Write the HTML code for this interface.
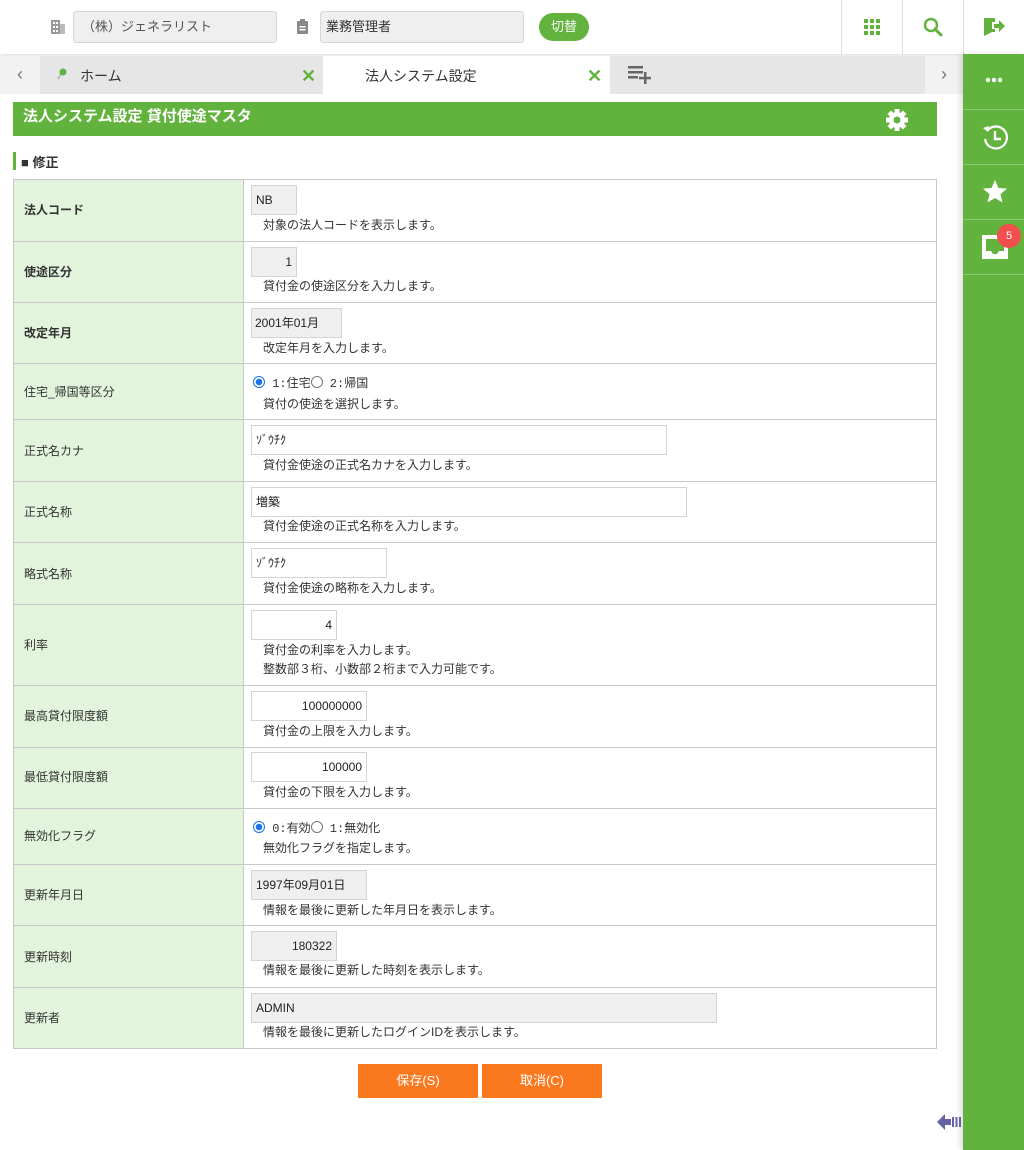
<!DOCTYPE html>
<html><head><meta charset="utf-8"><style>
*{box-sizing:border-box;margin:0;padding:0}
body{width:1024px;height:1150px;position:relative;background:#fff;font-family:"Liberation Sans","Noto Sans CJK JP",sans-serif;font-size:13px;color:#333;overflow:hidden}
.a{position:absolute}
.inp{position:absolute;border:1px solid #d4d4d4;height:30px;font-size:12px;line-height:28px;padding:0 4px;color:#222;background:#fff}
.g{background:#efefef}
.r{text-align:right}
.d{position:absolute;left:263px;font-size:12px;color:#333;line-height:19px}
.lab{position:absolute;left:24px;font-size:12px;color:#333}
.b{font-weight:bold}
.hl{position:absolute;left:13px;width:924px;height:1px;background:#c8c8c8}
.radio{display:inline-block;width:12px;height:12px;border-radius:50%;border:1px solid #777;vertical-align:-1px;background:#fff}
.radio.on{border:1px solid #1a73e8;background:radial-gradient(circle,#1a73e8 0 3px,#fff 3.5px)}
.rt{font-family:"Liberation Mono","Noto Sans CJK JP",monospace;font-size:12px}
.sb{position:absolute;left:963px;width:61px;height:1px;background:#8cc873}
</style></head><body>
<div class="a" style="left:0;top:0;width:1024px;height:54px;background:#fff;box-shadow:0 2px 3px rgba(0,0,0,.12)"></div>
<svg class="a" style="left:50px;top:19px" width="16" height="16"><rect x="1" y="1" width="9" height="14" fill="#999"/><rect x="10" y="5" width="5" height="10" fill="#bbb"/><g fill="#fff"><rect x="3" y="3" width="2" height="2"/><rect x="6" y="3" width="2" height="2"/><rect x="3" y="7" width="2" height="2"/><rect x="6" y="7" width="2" height="2"/><rect x="3" y="11" width="2" height="2"/><rect x="6" y="11" width="2" height="2"/></g></svg>
<div class="a" style="left:73px;top:11px;width:204px;height:32px;background:#efefef;border:1px solid #d6d6d6;border-radius:3px;font-size:13px;line-height:30px;padding-left:8px;color:#555">（株）ジェネラリスト</div>
<svg class="a" style="left:296px;top:19px" width="14" height="16"><rect x="1" y="2" width="11" height="13" rx="1" fill="#888"/><rect x="4" y="0" width="5" height="4" fill="#888"/><rect x="3.5" y="7" width="6" height="1.5" fill="#fff"/><rect x="3.5" y="10" width="6" height="1.5" fill="#fff"/></svg>
<div class="a" style="left:320px;top:11px;width:204px;height:32px;background:#efefef;border:1px solid #d6d6d6;border-radius:3px;font-size:13px;line-height:30px;padding-left:5px;color:#333">業務管理者</div>
<div class="a" style="left:539px;top:13px;width:50px;height:28px;background:#62b23e;border-radius:14px;color:#fff;font-size:13px;line-height:28px;text-align:center">切替</div>
<div class="a" style="left:841px;top:0;width:1px;height:54px;background:#ddd"></div>
<div class="a" style="left:902px;top:0;width:1px;height:54px;background:#ddd"></div>
<div class="a" style="left:963px;top:0;width:1px;height:54px;background:#ddd"></div>
<svg class="a" style="left:864px;top:19px" width="16" height="16" fill="#62b23e"><rect x="0" y="0" width="4" height="4"/><rect x="6" y="0" width="4" height="4"/><rect x="12" y="0" width="4" height="4"/><rect x="0" y="6" width="4" height="4"/><rect x="6" y="6" width="4" height="4"/><rect x="12" y="6" width="4" height="4"/><rect x="0" y="12" width="4" height="4"/><rect x="6" y="12" width="4" height="4"/><rect x="12" y="12" width="4" height="4"/></svg>
<svg class="a" style="left:923px;top:17px" width="20" height="20"><circle cx="8" cy="8" r="6" fill="none" stroke="#62b23e" stroke-width="2.5"/><path d="M12 12l6 6" stroke="#62b23e" stroke-width="3" stroke-linecap="round"/></svg>
<svg class="a" style="left:983px;top:17px" width="22" height="20"><path d="M1 1h11v4h-3v10l-8 4z" fill="#62b23e"/><path d="M9 15h3v-3h-3z" fill="#62b23e"/><path d="M11 7h5v-4l6 6-6 6v-4h-5z" fill="#62b23e"/></svg>
<div class="a" style="left:0;top:56px;width:963px;height:38px;background:#e6e6e6"></div>
<div class="a" style="left:0;top:56px;width:40px;height:38px;background:#f2f2f2;color:#777;font-size:18px;line-height:36px;text-align:center">&#8249;</div>
<div class="a" style="left:925px;top:56px;width:38px;height:38px;background:#f2f2f2;color:#777;font-size:18px;line-height:36px;text-align:center">&#8250;</div>
<svg class="a" style="left:56px;top:67px" width="12" height="14"><path d="M5 7L2 12" stroke="#aaa" stroke-width="1.3"/><circle cx="7" cy="5" r="3.5" fill="#62b23e"/></svg>
<div class="a" style="left:80px;top:66px;font-size:14px;color:#333">ホーム</div>
<div class="a" style="left:301px;top:66px;font-size:18px;font-weight:bold;color:#62b23e">✕</div>
<div class="a" style="left:323px;top:56px;width:287px;height:38px;background:#fff"></div>
<div class="a" style="left:365px;top:66px;font-size:14px;color:#333">法人システム設定</div>
<div class="a" style="left:587px;top:66px;font-size:18px;font-weight:bold;color:#62b23e">✕</div>
<svg class="a" style="left:628px;top:66px" width="26" height="18" fill="#666"><rect x="0" y="0" width="15" height="2.5"/><rect x="0" y="5" width="15" height="2.5"/><rect x="0" y="10" width="10" height="2.5"/><rect x="16" y="6" width="2.5" height="12"/><rect x="11" y="10.8" width="12" height="2.5"/></svg>
<div class="a" style="left:963px;top:54px;width:61px;height:1096px;background:#62b23e;box-shadow:-3px 0 5px rgba(0,0,0,.12)"></div>
<div class="sb" style="top:109px"></div><div class="sb" style="top:164px"></div><div class="sb" style="top:219px"></div><div class="sb" style="top:274px"></div>
<svg class="a" style="left:985px;top:77px" width="18" height="6" fill="#fff"><circle cx="3" cy="3" r="2.2"/><circle cx="9" cy="3" r="2.2"/><circle cx="15" cy="3" r="2.2"/></svg>
<svg class="a" style="left:981px;top:123px" width="28" height="28"><path d="M6 8A11 11 0 1 1 4 16" fill="none" stroke="#fff" stroke-width="2.2"/><path d="M2 5l5 4 1-6z" fill="#fff"/><path d="M14 8v8h6" fill="none" stroke="#fff" stroke-width="2.4"/></svg>
<svg class="a" style="left:982px;top:179px" width="26" height="26"><path d="M13 1l3.5 8 8.5.6-6.5 5.6 2 8.3L13 19l-7.5 4.5 2-8.3L1 9.6 9.5 9z" fill="#fff"/></svg>
<svg class="a" style="left:981px;top:232px" width="28" height="28"><path d="M1 3h26v24H1z M5 7v12h5l2 3h4l2-3h5V7z" fill="#fff" fill-rule="evenodd"/></svg>
<div class="a" style="left:997px;top:224px;width:24px;height:24px;border-radius:50%;background:#f34e4e;color:#fff;font-size:11px;line-height:24px;text-align:center">5</div>
<div class="a" style="left:13px;top:102px;width:924px;height:34px;background:#62b23e;color:#fff;font-size:15px;font-weight:bold;line-height:30px;padding-left:10px">法人システム設定 貸付使途マスタ</div>
<svg class="a" style="left:885px;top:108px" width="24" height="24"><g fill="#fff" transform="translate(12 12)"><rect x="-2.5" y="-11" width="5" height="22"/><rect x="-2.5" y="-11" width="5" height="22" transform="rotate(45)"/><rect x="-2.5" y="-11" width="5" height="22" transform="rotate(90)"/><rect x="-2.5" y="-11" width="5" height="22" transform="rotate(135)"/><circle r="8"/></g><circle cx="12" cy="12" r="3.5" fill="#62b23e"/></svg>
<div class="a" style="left:13px;top:152px;width:3px;height:18px;background:#62b23e"></div>
<div class="a" style="left:21px;top:152px;font-size:13px;font-weight:bold;color:#333">■ 修正</div>
<div class="a" style="left:13px;top:179px;width:924px;height:870px;border:1px solid #c8c8c8"></div>
<div class="a" style="left:14px;top:180px;width:230px;height:868px;background:#e2f4dc;border-right:1px solid #c8c8c8"></div>
<div class="hl" style="top:241px"></div><div class="hl" style="top:302px"></div><div class="hl" style="top:363px"></div><div class="hl" style="top:419px"></div><div class="hl" style="top:481px"></div><div class="hl" style="top:542px"></div><div class="hl" style="top:604px"></div><div class="hl" style="top:685px"></div><div class="hl" style="top:747px"></div><div class="hl" style="top:808px"></div><div class="hl" style="top:864px"></div><div class="hl" style="top:925px"></div><div class="hl" style="top:987px"></div>

<div class="lab b" style="top:201px">法人コード</div>
<div class="inp g" style="left:251px;top:185px;width:46px">NB</div>
<div class="d" style="top:216px">対象の法人コードを表示します。</div>

<div class="lab b" style="top:263px">使途区分</div>
<div class="inp g r" style="left:251px;top:247px;width:46px">1</div>
<div class="d" style="top:277px">貸付金の使途区分を入力します。</div>

<div class="lab b" style="top:324px">改定年月</div>
<div class="inp g" style="left:251px;top:308px;width:91px;padding-left:3px">2001年01月</div>
<div class="d" style="top:339px">改定年月を入力します。</div>

<div class="lab" style="top:383px">住宅_帰国等区分</div>
<div class="a rt" style="left:253px;top:374px"><span class="radio on"></span> 1:住宅<span class="radio"></span> 2:帰国</div>
<div class="d" style="top:395px">貸付の使途を選択します。</div>

<div class="lab" style="top:442px">正式名カナ</div>
<div class="inp" style="left:251px;top:425px;width:416px">ｿﾞｳﾁｸ</div>
<div class="d" style="top:456px">貸付金使途の正式名カナを入力します。</div>

<div class="lab" style="top:503px">正式名称</div>
<div class="inp" style="left:251px;top:487px;width:436px">増築</div>
<div class="d" style="top:517px">貸付金使途の正式名称を入力します。</div>

<div class="lab" style="top:565px">略式名称</div>
<div class="inp" style="left:251px;top:548px;width:136px">ｿﾞｳﾁｸ</div>
<div class="d" style="top:579px">貸付金使途の略称を入力します。</div>

<div class="lab" style="top:636px">利率</div>
<div class="inp r" style="left:251px;top:610px;width:86px">4</div>
<div class="d" style="top:641px">貸付金の利率を入力します。<br>整数部３桁、小数部２桁まで入力可能です。</div>

<div class="lab" style="top:707px">最高貸付限度額</div>
<div class="inp r" style="left:251px;top:691px;width:116px">100000000</div>
<div class="d" style="top:722px">貸付金の上限を入力します。</div>

<div class="lab" style="top:768px">最低貸付限度額</div>
<div class="inp r" style="left:251px;top:752px;width:116px">100000</div>
<div class="d" style="top:783px">貸付金の下限を入力します。</div>

<div class="lab" style="top:827px">無効化フラグ</div>
<div class="a rt" style="left:253px;top:819px"><span class="radio on"></span> 0:有効<span class="radio"></span> 1:無効化</div>
<div class="d" style="top:839px">無効化フラグを指定します。</div>

<div class="lab" style="top:886px">更新年月日</div>
<div class="inp g" style="left:251px;top:870px;width:116px">1997年09月01日</div>
<div class="d" style="top:901px">情報を最後に更新した年月日を表示します。</div>

<div class="lab" style="top:948px">更新時刻</div>
<div class="inp g r" style="left:251px;top:931px;width:86px">180322</div>
<div class="d" style="top:961px">情報を最後に更新した時刻を表示します。</div>

<div class="lab" style="top:1009px">更新者</div>
<div class="inp g" style="left:251px;top:993px;width:466px">ADMIN</div>
<div class="d" style="top:1023px">情報を最後に更新したログインIDを表示します。</div>

<div class="a" style="left:358px;top:1064px;width:120px;height:34px;background:#fa791f;color:#fff;font-size:13px;line-height:34px;text-align:center">保存(S)</div>
<div class="a" style="left:482px;top:1064px;width:120px;height:34px;background:#fa791f;color:#fff;font-size:13px;line-height:34px;text-align:center">取消(C)</div>
<svg class="a" style="left:937px;top:1112px" width="26" height="20"><path d="M0 10L8 2v5h6v6H8v5z" fill="#6462a4"/><rect x="15" y="5" width="2" height="10" fill="#6462a4"/><rect x="18.5" y="5" width="2" height="10" fill="#6462a4"/><rect x="22" y="5" width="2" height="10" fill="#6462a4"/></svg>
</body></html>
